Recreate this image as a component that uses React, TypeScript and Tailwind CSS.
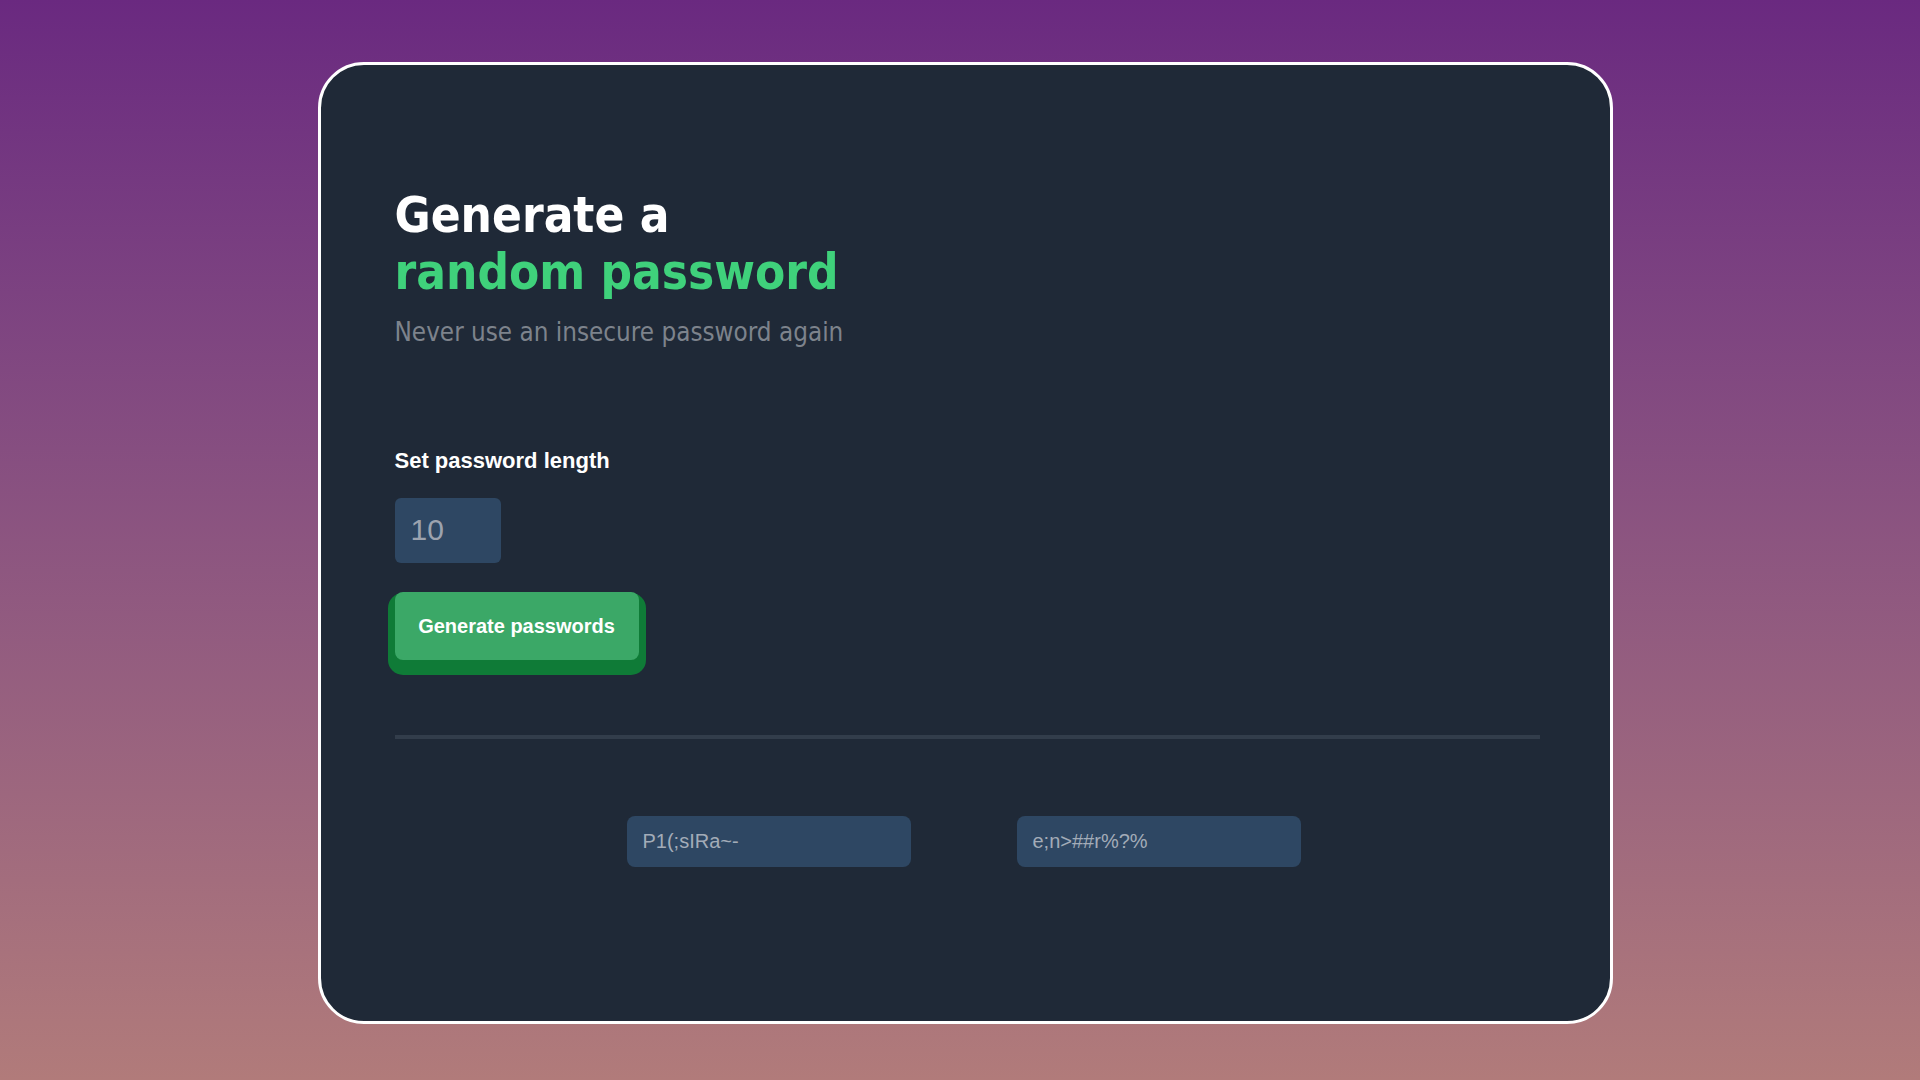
import { useState } from 'react'

const chars =
  'ABCDEFGHIJKLMNOPQRSTUVWXYZabcdefghijklmnopqrstuvwxyz0123456789~`!@#$%^&*()_-+={[}]|:;<>.?/'

function makePassword(len: number) {
  let out = ''
  for (let i = 0; i < len; i++) out += chars[Math.floor(Math.random() * chars.length)]
  return out
}

export default function App() {
  const [length, setLength] = useState('10')
  const [passwords, setPasswords] = useState(['P1(;sIRa~-', 'e;n>##r%?%'])

  const generate = () => {
    const n = Math.max(1, Math.min(64, parseInt(length) || 10))
    setPasswords([makePassword(n), makePassword(n)])
  }

  return (
    <div className="min-h-screen w-full bg-gradient-to-b from-[#6a2980] to-[#b17b7a] flex justify-center pl-[10px] pt-[62px] pb-[56px]">
      <div className="w-[1295px] h-[962px] bg-[#1f2937] border-[3px] border-white rounded-[46px] pl-[74px] pr-[70px] pt-[122px] flex flex-col">
        {/* Titulo */}
        <h1 className="font-['DejaVu_Sans_Condensed','DejaVu_Sans',sans-serif] font-bold text-[49px] leading-[57px] text-white">
          Generate a
          <br />
          <span className="text-[#3fd17b]">random password</span>
        </h1>
        <p className="mt-[12px] font-['DejaVu_Sans_Condensed','DejaVu_Sans',sans-serif] text-[25.8px] text-[#7d838c]">
          Never use an insecure password again
        </p>

        {/* Comprimento */}
        <label className="mt-[92px] font-['Liberation_Sans',Arial,sans-serif] font-bold text-[22px] text-white">
          Set password length
        </label>
        <input
          type="number"
          value={length}
          onChange={(e) => setLength(e.target.value)}
          className="mt-[21px] w-[106px] h-[65px] rounded-md bg-[#2e4763] px-[16px] font-['Liberation_Sans',Arial,sans-serif] text-[30px] text-[#9ca3af] outline-none [appearance:textfield] [&::-webkit-inner-spin-button]:appearance-none"
        />

        <button
          onClick={generate}
          className="mt-[29px] self-start w-[244px] h-[68px] rounded-lg bg-[#3ba867] shadow-[0_8px_0_7px_#0f7b37] font-['Liberation_Sans',Arial,sans-serif] font-bold text-[20px] text-white"
        >
          Generate passwords
        </button>

        <div className="mt-[75px] h-[4px] bg-[#323d4b]" />

        {/* Senhas */}
        <div className="mt-[77px] flex justify-center gap-[106px] pr-[7px]">
          {passwords.map((p, i) => (
            <div
              key={i}
              className="w-[284px] h-[51px] rounded-lg bg-[#2e4763] px-[16px] flex items-center font-['Liberation_Sans',Arial,sans-serif] text-[20px] text-[#a3acb8]"
            >
              {p}
            </div>
          ))}
        </div>
      </div>
    </div>
  )
}
